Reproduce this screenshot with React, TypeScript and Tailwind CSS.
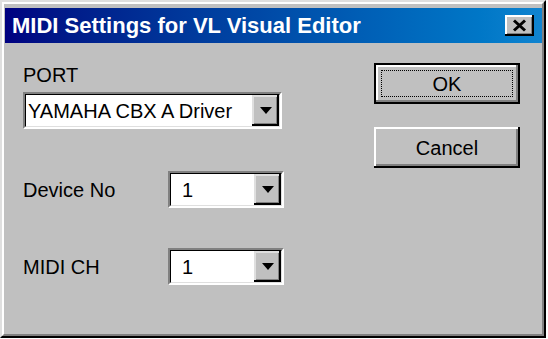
import React from 'react';

const DropButton: React.FC = () => (
  <div className="flex w-[27px] items-center justify-center bg-[#c0c0c0] shadow-[inset_-2px_-2px_#000,inset_2px_2px_#dfdfdf,inset_-3px_-3px_#808080]">
    <svg width="12" height="7" viewBox="0 0 12 7">
      <polygon points="0,0 12,0 6,7" fill="#000" />
    </svg>
  </div>
);

interface ComboProps {
  value: string;
  className: string;
  textClass: string;
}

const Combo: React.FC<ComboProps> = ({ value, className, textClass }) => (
  <div className={`flex h-[37px] border-2 border-t-[#808080] border-l-[#808080] border-b-white border-r-white ${className}`}>
    <div className="flex flex-1 border border-t-black border-l-black border-b-[#dfdfdf] border-r-[#dfdfdf] bg-white">
      <div className={`flex flex-1 items-center text-[20px] leading-none text-black ${textClass}`}>{value}</div>
      <DropButton />
    </div>
  </div>
);

export default function App() {
  return (
    <div className="h-[339px] w-[548px] bg-white font-['Liberation_Sans',Arial,sans-serif]">
      {/* Window frame */}
      <div className="h-[338px] w-[546px] border-2 border-t-[#dfdfdf] border-l-[#dfdfdf] border-b-black border-r-black">
        <div className="flex h-full flex-col border-2 border-t-white border-l-white border-b-[#808080] border-r-[#808080] bg-[#c0c0c0] pl-[1px] pt-[4px]">
          {/* Title bar */}
          <div className="flex h-[35px] items-center bg-gradient-to-r from-[#000080] to-[#1084d0] pl-[7px] pr-[8px]">
            <span className="flex-1 text-[22px] font-bold leading-none text-white">MIDI Settings for VL Visual Editor</span>
            <div className="flex h-[21px] w-[29px] items-center justify-center bg-[#c0c0c0] shadow-[inset_-2px_-2px_#000,inset_2px_2px_#fff,inset_-3px_-3px_#808080]">
              <svg width="15" height="13" viewBox="0 0 15 13">
                <path d="M2 1.5 L13 11.5 M13 1.5 L2 11.5" stroke="#000" strokeWidth="3" />
              </svg>
            </div>
          </div>

          {/* Body */}
          <div className="flex flex-1 items-start">
            <div className="flex flex-col pl-[18px] pt-[22px]">
              <span className="text-[20px] leading-none text-black">PORT</span>
              <Combo value="YAMAHA CBX A Driver" className="mt-[7px] w-[259px]" textClass="pl-[2px]" />
              <div className="mt-[42px] flex items-center">
                <span className="w-[145px] text-[20px] leading-none text-black">Device No</span>
                <Combo value="1" className="w-[116px]" textClass="pl-[11px]" />
              </div>
              <div className="mt-[40px] flex items-center">
                <span className="w-[145px] text-[20px] leading-none text-black">MIDI CH</span>
                <Combo value="1" className="w-[116px]" textClass="pl-[11px]" />
              </div>
            </div>

            <div className="ml-auto mr-[22px] flex flex-col pt-[20px]">
              <div className="flex h-[41px] w-[146px] border-2 border-black">
                <div className="flex flex-1 bg-[#c0c0c0] shadow-[inset_-2px_-2px_#808080,inset_2px_2px_#fff]">
                  <div className="m-[5px] flex flex-1 items-center justify-center border border-dotted border-black text-[20px] leading-none text-black">
                    OK
                  </div>
                </div>
              </div>
              <div className="mt-[23px] flex h-[41px] w-[146px] items-center justify-center bg-[#c0c0c0] text-[20px] leading-none text-black shadow-[inset_-2px_-2px_#000,inset_2px_2px_#fff,inset_-4px_-4px_#808080]">
                Cancel
              </div>
            </div>
          </div>
        </div>
      </div>
    </div>
  );
}
